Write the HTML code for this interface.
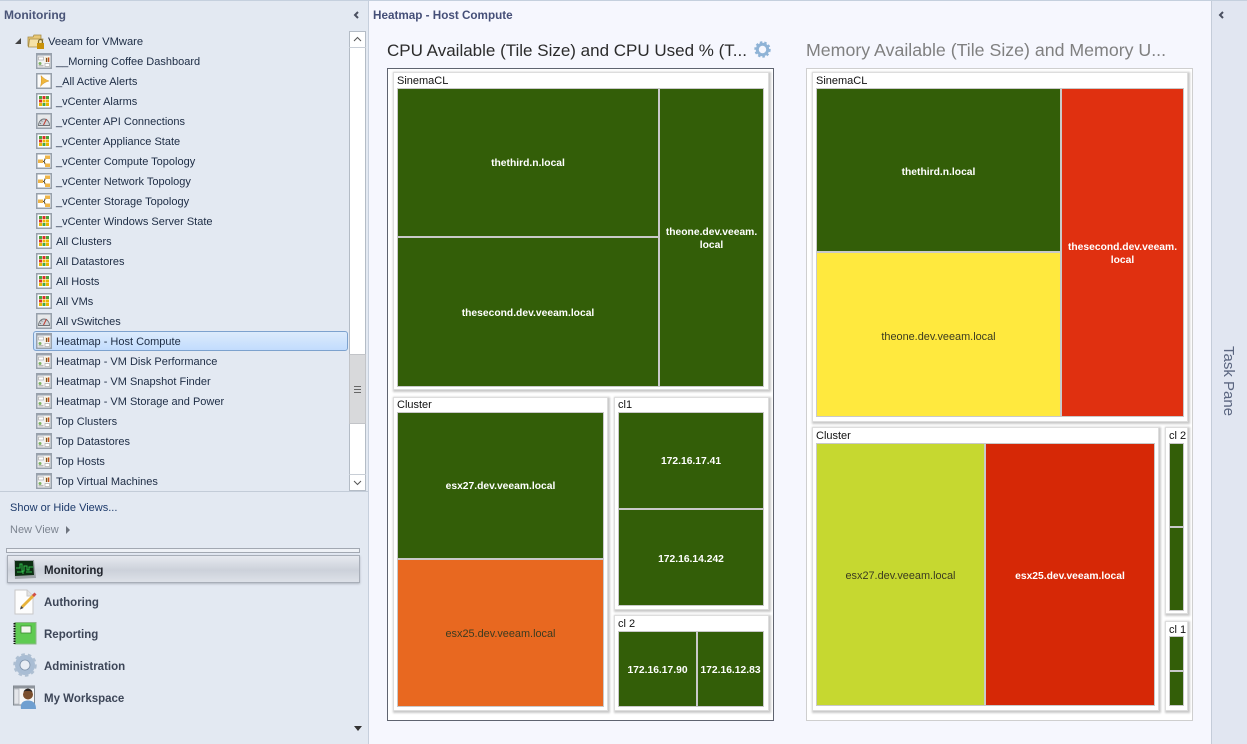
<!DOCTYPE html>
<html><head><meta charset="utf-8"><title>Heatmap - Host Compute</title>
<style>
html,body{margin:0;padding:0}
body{width:1247px;height:744px;overflow:hidden;position:relative;background:#f6f7fe;font-family:"Liberation Sans",sans-serif;font-size:12px;color:#1e2a3a}
div,svg,span{position:absolute;box-sizing:border-box}
.r{left:56px;height:20px;line-height:20px;margin-top:1px;white-space:nowrap;font-size:11px;color:#1d2c44}
.i{left:36px;width:16px;height:16px}
.g{background:#fff;box-shadow:1px 1px 2px 1px #c8c8c8;border:1px solid #ddd}
.l{font-size:11px;line-height:14px;margin-top:1px;color:#111;white-space:nowrap}
.t{background:#335e08;border:1px solid #c9c9c9;display:flex;align-items:center;justify-content:center;text-align:center;color:#fff;font-weight:bold;font-size:10.3px;line-height:13px;padding-top:2px}
.d{color:#3b3b20;font-weight:normal;font-size:10.9px}
.n{left:44px;font-size:11.5px;font-weight:bold;color:#3d4658;line-height:16px;margin-top:1px;white-space:nowrap}
</style></head><body>
<svg width="0" height="0" style="position:absolute"><defs>
<symbol id="grid" viewBox="0 0 16 16"><rect x=".75" y=".75" width="14.500" height="14.500" fill="#fff" stroke="#97a0ab" stroke-width="1.500"/><rect x="3" y="3" width="3" height="3" fill="#4aa63c"/><rect x="6.500" y="3" width="3" height="3" fill="#d9322a"/><rect x="10" y="3" width="3" height="3" fill="#4aa63c"/><rect x="3" y="6.500" width="3" height="3" fill="#d9322a"/><rect x="6.500" y="6.500" width="3" height="3" fill="#e9b800"/><rect x="10" y="6.500" width="3" height="3" fill="#e9b800"/><rect x="3" y="10" width="3" height="3" fill="#e9b800"/><rect x="6.500" y="10" width="3" height="3" fill="#4aa63c"/><rect x="10" y="10" width="3" height="3" fill="#e9b800"/></symbol>
<symbol id="dash" viewBox="0 0 16 16"><rect x=".75" y=".75" width="14.500" height="14.500" fill="#f3f3f3" stroke="#97a0ab" stroke-width="1.500"/><rect x="1" y="1" width="14" height="1.500" fill="#9aa3ae"/><rect x="2.500" y="4" width="5" height="3" fill="#fff" stroke="#aaa" stroke-width=".7"/><circle cx="4" cy="10.500" r="1.500" fill="#7fb265"/><rect x="2.500" y="12" width="5" height="1.500" fill="#bbb"/><rect x="9" y="4" width="4.500" height="5" fill="#f1e3c0"/><rect x="10" y="5" width="1.300" height="4" fill="#7a4a20"/><rect x="12" y="4.500" width="1.300" height="4.500" fill="#c8501e"/><rect x="9" y="10.500" width="4.500" height="3" fill="#fff" stroke="#aaa" stroke-width=".7"/></symbol>
<symbol id="alert" viewBox="0 0 16 16"><rect x=".75" y=".75" width="14.500" height="14.500" fill="#fbfbfb" stroke="#97a0ab" stroke-width="1.500"/><path d="M5 2.500C7 5 10 7 13 8 10 9 7 10 4.500 13.500 5.500 10 5.500 6 5 2.500Z" fill="#efb73c" stroke="#d4952a" stroke-width=".5"/></symbol>
<symbol id="gauge" viewBox="0 0 16 16"><rect x=".75" y=".75" width="14.500" height="14.500" fill="#e6e8ea" stroke="#97a0ab" stroke-width="1.500"/><path d="M2.500 12.500A5.500 6.500 0 0 1 13.500 12.500Z" fill="#cfd3d7" stroke="#6e7378" stroke-width=".9"/><path d="M7.500 12L10.500 6" stroke="#c0392b" stroke-width="1"/><path d="M4 11L5 10M5.500 7.500L6.300 8.500" stroke="#666" stroke-width=".7"/></symbol>
<symbol id="topo" viewBox="0 0 16 16"><rect x=".75" y=".75" width="14.500" height="14.500" fill="#fff" stroke="#97a0ab" stroke-width="1.500"/><path d="M6 8.500H8L9.500 5M8 8.500L9.500 11.500" stroke="#55482a" stroke-width="1" fill="none"/><rect x="2" y="6.500" width="5" height="3.500" fill="#efb64a"/><rect x="9" y="2.500" width="5" height="3.500" fill="#efb64a"/><rect x="9" y="10.500" width="5" height="3.500" fill="#efb64a"/></symbol>
</defs></svg>

<div style="left:0;top:0;width:1247px;height:1px;background:#c5d0de"></div>

<!-- left panel -->
<div style="left:0;top:1px;width:369px;height:743px;background:#e3e9f2;border-right:1px solid #c6cfdc"></div>
<div style="left:4px;top:8px;font-size:12px;font-weight:bold;color:#4a5578;line-height:15px">Monitoring</div>
<svg style="left:353px;top:11px" width="7" height="8" viewBox="0 0 7 8"><path d="M5 1L2 4 5 7" stroke="#4a5060" stroke-width="2" fill="none"/></svg>

<svg style="left:14px;top:37px" width="8" height="8" viewBox="0 0 8 8"><path d="M7 1V7H1Z" fill="#444"/></svg>
<svg style="left:27px;top:32px" width="18" height="18" viewBox="0 0 18 18"><path d="M1 5H6L7 3H14V14H1Z" fill="#e8c878" stroke="#a58a42" stroke-width=".8"/><path d="M2.500 7H16L14 15H1.500Z" fill="#f5e2a8" stroke="#a58a42" stroke-width=".8"/><rect x="10" y="11" width="7" height="6" fill="#c8920a"/><path d="M11.500 11V9.500A2 2 0 0 1 15.500 9.500V11" fill="none" stroke="#7a6a30" stroke-width="1.200"/></svg>
<div class="r" style="left:48px;top:31px;font-size:11.2px">Veeam for VMware</div>

<svg class="i" style="top:53px"><use href="#dash"/></svg><div class="r" style="top:51px">__Morning Coffee Dashboard</div>
<svg class="i" style="top:73px"><use href="#alert"/></svg><div class="r" style="top:71px">_All Active Alerts</div>
<svg class="i" style="top:93px"><use href="#grid"/></svg><div class="r" style="top:91px">_vCenter Alarms</div>
<svg class="i" style="top:113px"><use href="#gauge"/></svg><div class="r" style="top:111px">_vCenter API Connections</div>
<svg class="i" style="top:133px"><use href="#grid"/></svg><div class="r" style="top:131px">_vCenter Appliance State</div>
<svg class="i" style="top:153px"><use href="#topo"/></svg><div class="r" style="top:151px">_vCenter Compute Topology</div>
<svg class="i" style="top:173px"><use href="#topo"/></svg><div class="r" style="top:171px">_vCenter Network Topology</div>
<svg class="i" style="top:193px"><use href="#topo"/></svg><div class="r" style="top:191px">_vCenter Storage Topology</div>
<svg class="i" style="top:213px"><use href="#grid"/></svg><div class="r" style="top:211px">_vCenter Windows Server State</div>
<svg class="i" style="top:233px"><use href="#grid"/></svg><div class="r" style="top:231px">All Clusters</div>
<svg class="i" style="top:253px"><use href="#grid"/></svg><div class="r" style="top:251px">All Datastores</div>
<svg class="i" style="top:273px"><use href="#grid"/></svg><div class="r" style="top:271px">All Hosts</div>
<svg class="i" style="top:293px"><use href="#grid"/></svg><div class="r" style="top:291px">All VMs</div>
<svg class="i" style="top:313px"><use href="#gauge"/></svg><div class="r" style="top:311px">All vSwitches</div>
<div style="left:33px;top:331px;width:315px;height:20px;border:1px solid #7da2ce;border-radius:3px;background:linear-gradient(#dcebfc,#c2dcfd)"></div>
<svg class="i" style="top:333px"><use href="#dash"/></svg><div class="r" style="top:331px">Heatmap - Host Compute</div>
<svg class="i" style="top:353px"><use href="#dash"/></svg><div class="r" style="top:351px">Heatmap - VM Disk Performance</div>
<svg class="i" style="top:373px"><use href="#dash"/></svg><div class="r" style="top:371px">Heatmap - VM Snapshot Finder</div>
<svg class="i" style="top:393px"><use href="#dash"/></svg><div class="r" style="top:391px">Heatmap - VM Storage and Power</div>
<svg class="i" style="top:413px"><use href="#dash"/></svg><div class="r" style="top:411px">Top Clusters</div>
<svg class="i" style="top:433px"><use href="#dash"/></svg><div class="r" style="top:431px">Top Datastores</div>
<svg class="i" style="top:453px"><use href="#dash"/></svg><div class="r" style="top:451px">Top Hosts</div>
<svg class="i" style="top:473px"><use href="#dash"/></svg><div class="r" style="top:471px">Top Virtual Machines</div>

<!-- scrollbar -->
<div style="left:349px;top:31px;width:17px;height:460px;background:#fff;border:1px solid #b4bcc6"></div>
<div style="left:349px;top:47px;width:17px;height:1px;background:#c8ced6"></div>
<div style="left:349px;top:474px;width:17px;height:1px;background:#c8ced6"></div>
<svg style="left:353px;top:36px" width="9" height="6" viewBox="0 0 9 6"><path d="M1 5L4.500 1.500 8 5" stroke="#555" stroke-width="1" fill="none"/></svg>
<svg style="left:353px;top:480px" width="9" height="6" viewBox="0 0 9 6"><path d="M1 1L4.500 4.500 8 1" stroke="#555" stroke-width="1" fill="none"/></svg>
<div style="left:349px;top:354px;width:17px;height:70px;background:#d8d9db;border:1px solid #c2c4c8"></div>
<div style="left:354px;top:386px;width:7px;height:7px;border-top:1px solid #666;border-bottom:1px solid #666"></div>
<div style="left:354px;top:389px;width:7px;height:1px;background:#666"></div>

<div style="left:0;top:491px;width:368px;height:1px;background:#c3ccd8"></div>
<div style="left:10px;top:501px;font-size:11px;line-height:14px;color:#1d3a6b;white-space:nowrap">Show or Hide Views...</div>
<div style="left:10px;top:523px;font-size:11px;line-height:14px;color:#7c8490;white-space:nowrap">New View</div>
<svg style="left:65px;top:526px" width="6" height="8" viewBox="0 0 6 8"><path d="M1 0L5 4 1 8Z" fill="#6e747e"/></svg>

<div style="left:6px;top:548px;width:354px;height:5px;background:#eef1f6;border:1px solid #a2a8b2"></div>
<div style="left:7px;top:555px;width:353px;height:28px;border:1px solid #a8aeb8;box-shadow:0 1px 2px #b0b6c0;background:linear-gradient(#e6e9ef,#ccd1da 55%,#dde1e8)"></div>

<svg style="left:13px;top:559px" width="23" height="21" viewBox="0 0 23 21"><path d="M1 1L21 1 23 19 2 20Z" fill="#9ea3a8"/><path d="M2 2L20 2 21 16 2 17Z" fill="#0c2e12"/><path d="M3 9H7V5H9V12H11V7H14V11H16V8H20M4 13H10V15M13 13H19" stroke="#2fb84a" stroke-width="1" fill="none"/></svg>
<div class="n" style="top:562px;color:#22262e">Monitoring</div>

<svg style="left:14px;top:589px" width="24" height="26" viewBox="0 0 24 26"><path d="M1 1H13L19 7V25H1Z" fill="#fdfdfd" stroke="#c8c8c8"/><path d="M13 1V7H19" fill="#e2e2e2" stroke="#c8c8c8"/><path d="M8 18L20 6" stroke="#e7b23a" stroke-width="2.800"/><path d="M19 7L21.500 4.500" stroke="#d0504a" stroke-width="2.800"/><path d="M6 20.500L7 17 9.500 19Z" fill="#444"/></svg>
<div class="n" style="top:594px">Authoring</div>

<svg style="left:13px;top:621px" width="24" height="24" viewBox="0 0 24 24"><rect x="2" y="1.500" width="21" height="21.500" fill="#5fcb52" stroke="#8eb88a"/><path d="M1.500 2V23" stroke="#111" stroke-width="2" stroke-dasharray="1.500 1"/><rect x="8" y="5" width="10" height="7" fill="#f2f7ee" stroke="#3a8a30" stroke-width=".8"/></svg>
<div class="n" style="top:626px">Reporting</div>

<svg style="left:13px;top:653px" width="24" height="24" viewBox="0 0 24 24"><circle cx="12" cy="12" r="7.500" fill="none" stroke="#a9bdd4" stroke-width="5"/><circle cx="12" cy="12" r="10.500" fill="none" stroke="#aebfd2" stroke-width="2.500" stroke-dasharray="3.500 3"/><circle cx="12" cy="12" r="5" fill="#e9eef4" stroke="#7e93aa" stroke-width=".8"/></svg>
<div class="n" style="top:658px">Administration</div>

<svg style="left:13px;top:685px" width="24" height="24" viewBox="0 0 24 24"><rect x=".5" y="1" width="21" height="19" fill="#f7f7f7" stroke="#808890"/><rect x="1" y="1" width="21" height="2.500" fill="#8e949c"/><path d="M1 4H6V19H1Z" fill="#e4e6ea" stroke="#9aa0a8" stroke-width=".6"/><path d="M8 24C7 18 10 15.500 15 15.500S23 18 23 24Z" fill="#6f9fd0"/><circle cx="15" cy="9.500" r="5" fill="#7a4f2e"/><path d="M10.500 7C12 2.500 18 2.500 19.500 7L17 6H12Z" fill="#2a2320"/></svg>
<div class="n" style="top:690px">My Workspace</div>
<svg style="left:354px;top:726px" width="8" height="5" viewBox="0 0 8 5"><path d="M0 0H8L4 5Z" fill="#333"/></svg>

<!-- header -->
<div style="left:373px;top:8px;font-size:11.7px;font-weight:bold;color:#454f78;line-height:15px;white-space:nowrap">Heatmap - Host Compute</div>
<div style="left:387px;top:40px;font-size:17px;line-height:21px;color:#2c2c2c;white-space:nowrap">CPU Available (Tile Size) and CPU Used % (T...</div>
<svg style="left:754px;top:41px" width="17" height="17" viewBox="0 0 17 17"><circle cx="8.500" cy="8.500" r="5.200" fill="none" stroke="#8fb3d6" stroke-width="3"/><circle cx="8.500" cy="8.500" r="7.300" fill="none" stroke="#8fb3d6" stroke-width="1.800" stroke-dasharray="2.500 2"/></svg>
<div style="left:806px;top:40px;font-size:17.75px;line-height:21px;color:#808080;white-space:nowrap">Memory Available (Tile Size) and Memory U...</div>

<!-- left chart -->
<div style="left:387px;top:68px;width:387px;height:653px;background:#fff;border:1px solid #5f6470"></div>
<div class="g" style="left:393px;top:72px;width:376px;height:318px"></div>
<div class="l" style="left:397px;top:73px">SinemaCL</div>
<div class="t" style="left:397px;top:88px;width:262px;height:149px">thethird.n.local</div>
<div class="t" style="left:397px;top:237px;width:262px;height:150px">thesecond.dev.veeam.local</div>
<div class="t" style="left:659px;top:88px;width:105px;height:299px">theone.dev.veeam.<br>local</div>

<div class="g" style="left:393px;top:397px;width:215px;height:314px"></div>
<div class="l" style="left:397px;top:397px">Cluster</div>
<div class="t" style="left:397px;top:412px;width:207px;height:147px">esx27.dev.veeam.local</div>
<div class="t d" style="left:397px;top:559px;width:207px;height:148px;background:#e86820">esx25.dev.veeam.local</div>

<div class="g" style="left:614px;top:397px;width:155px;height:213px"></div>
<div class="l" style="left:618px;top:397px">cl1</div>
<div class="t" style="left:618px;top:412px;width:146px;height:97px">172.16.17.41</div>
<div class="t" style="left:618px;top:509px;width:146px;height:97px;padding-top:4px">172.16.14.242</div>

<div class="g" style="left:614px;top:615px;width:155px;height:96px"></div>
<div class="l" style="left:618px;top:616px">cl 2</div>
<div class="t" style="left:618px;top:631px;width:79px;height:76px">172.16.17.90</div>
<div class="t" style="left:697px;top:631px;width:67px;height:76px;white-space:nowrap">172.16.12.83</div>

<!-- right chart -->
<div style="left:806px;top:68px;width:387px;height:653px;background:#fff;border:1px solid #cfcfcf"></div>
<div class="g" style="left:812px;top:72px;width:376px;height:350px"></div>
<div class="l" style="left:816px;top:73px">SinemaCL</div>
<div class="t" style="left:816px;top:88px;width:245px;height:164px;padding-top:4px">thethird.n.local</div>
<div class="t d" style="left:816px;top:252px;width:245px;height:165px;background:#ffe93e;padding-top:6px">theone.dev.veeam.local</div>
<div class="t" style="left:1061px;top:88px;width:123px;height:329px;background:#e03010">thesecond.dev.veeam.<br>local</div>

<div class="g" style="left:812px;top:427px;width:347px;height:284px"></div>
<div class="l" style="left:816px;top:428px">Cluster</div>
<div class="t d" style="left:816px;top:443px;width:169px;height:263px;background:#c6d830;padding-top:4px">esx27.dev.veeam.local</div>
<div class="t" style="left:985px;top:443px;width:170px;height:263px;background:#d62806;padding-top:4px">esx25.dev.veeam.local</div>

<div class="g" style="left:1165px;top:427px;width:23px;height:187px"></div>
<div class="l" style="left:1169px;top:428px">cl 2</div>
<div class="t" style="left:1169px;top:443px;width:15px;height:84px"></div>
<div class="t" style="left:1169px;top:527px;width:15px;height:84px"></div>

<div class="g" style="left:1165px;top:621px;width:23px;height:90px"></div>
<div class="l" style="left:1169px;top:622px">cl 1</div>
<div class="t" style="left:1169px;top:636px;width:15px;height:35px"></div>
<div class="t" style="left:1169px;top:671px;width:15px;height:35px"></div>

<!-- right task pane -->
<div style="left:1211px;top:1px;width:36px;height:743px;background:#e1e6f1;border-left:1px solid #c4ccd9"></div>
<svg style="left:1218px;top:11px" width="7" height="8" viewBox="0 0 7 8"><path d="M5 1L2 4 5 7" stroke="#4a5060" stroke-width="2" fill="none"/></svg>
<div style="left:1193px;top:373px;width:70px;height:16px;line-height:16px;font-size:15px;text-align:center;color:#5b6680;transform:rotate(90deg);white-space:nowrap">Task Pane</div>
</body></html>
